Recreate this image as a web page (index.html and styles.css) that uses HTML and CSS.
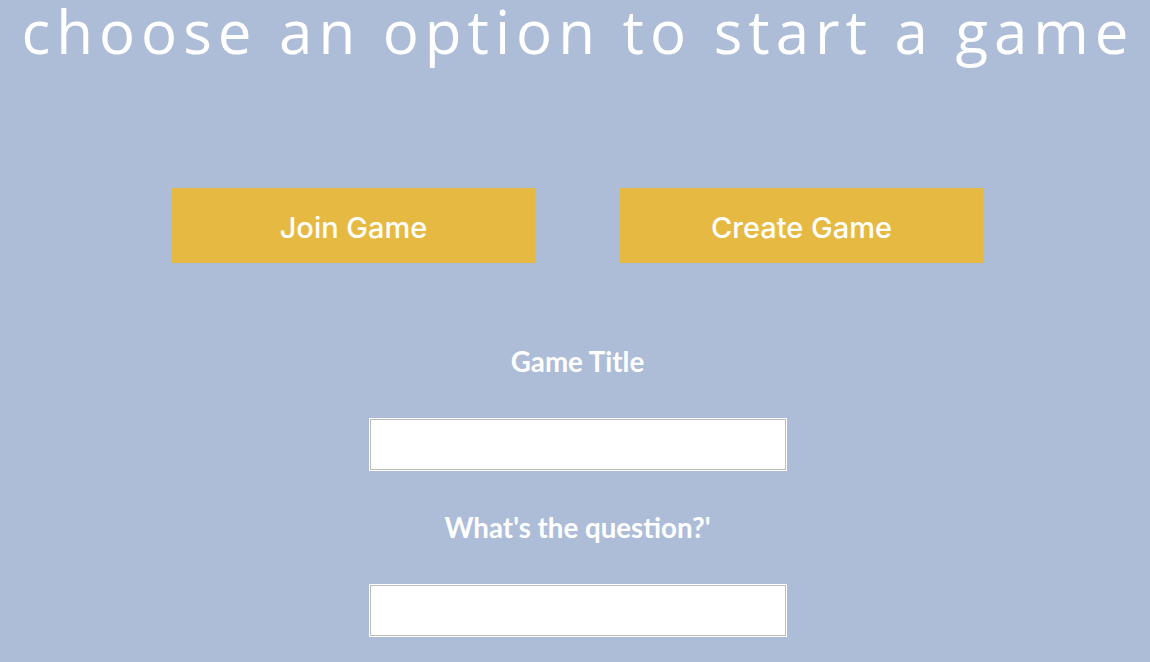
FILE: index.html
```html
<!DOCTYPE html>
<html>
<head>
<meta charset="utf-8">
<link rel="stylesheet" href="styles.css">
</head>
<body>
<div class="page">
  <h1 class="title">choose an option to start a game</h1>
  <div class="content">
    <div class="buttons">
      <button class="btn">Join Game</button>
      <button class="btn">Create Game</button>
    </div>
    <form class="form">
      <label class="label">Game Title</label>
      <input class="field" type="text">
      <label class="label">What's the question?'</label>
      <input class="field" type="text">
    </form>
  </div>
</div>
</body>
</html>
```

FILE: styles.css
```css
html, body {
  margin: 0;
  padding: 0;
  background: #adbdd8;
  height: 100%;
  overflow: hidden;
}
.page {
  display: flex;
  flex-direction: column;
  align-items: center;
  font-family: Lato, "Liberation Sans", sans-serif;
  color: #ffffff;
}
.title {
  margin: 0;
  font-family: "Open Sans", sans-serif;
  font-weight: 400;
  font-size: 60px;
  letter-spacing: 6px;
  line-height: 62px;
  height: 62px;
  white-space: nowrap;
  padding-left: 6px;
}
.content {
  display: flex;
  flex-direction: column;
  align-items: center;
  padding-left: 5px;
}
.buttons {
  display: flex;
  gap: 85px;
  margin-top: 126px;
}
.btn {
  width: 363px;
  height: 75px;
  background: #e6ba42;
  border: none;
  color: #ffffff;
  font-family: Inter, "Noto Sans", sans-serif;
  font-size: 29px;
  font-weight: 500;
  padding: 4px 0 0 0;
  line-height: 71px;
}
.form {
  display: flex;
  flex-direction: column;
  align-items: center;
  margin-top: 81px;
}
.label {
  font-family: Lato, sans-serif;
  font-weight: 700;
  font-size: 27.7px;
  line-height: 36px;
  height: 36px;
}
.field {
  width: 416px;
  height: 51px;
  box-sizing: border-box;
  border: 1px solid #bdbdbd;
  box-shadow: 0 0 0 1px #ffffff;
  background: #ffffff;
  margin-top: 39px;
  margin-bottom: 40px;
}
```
